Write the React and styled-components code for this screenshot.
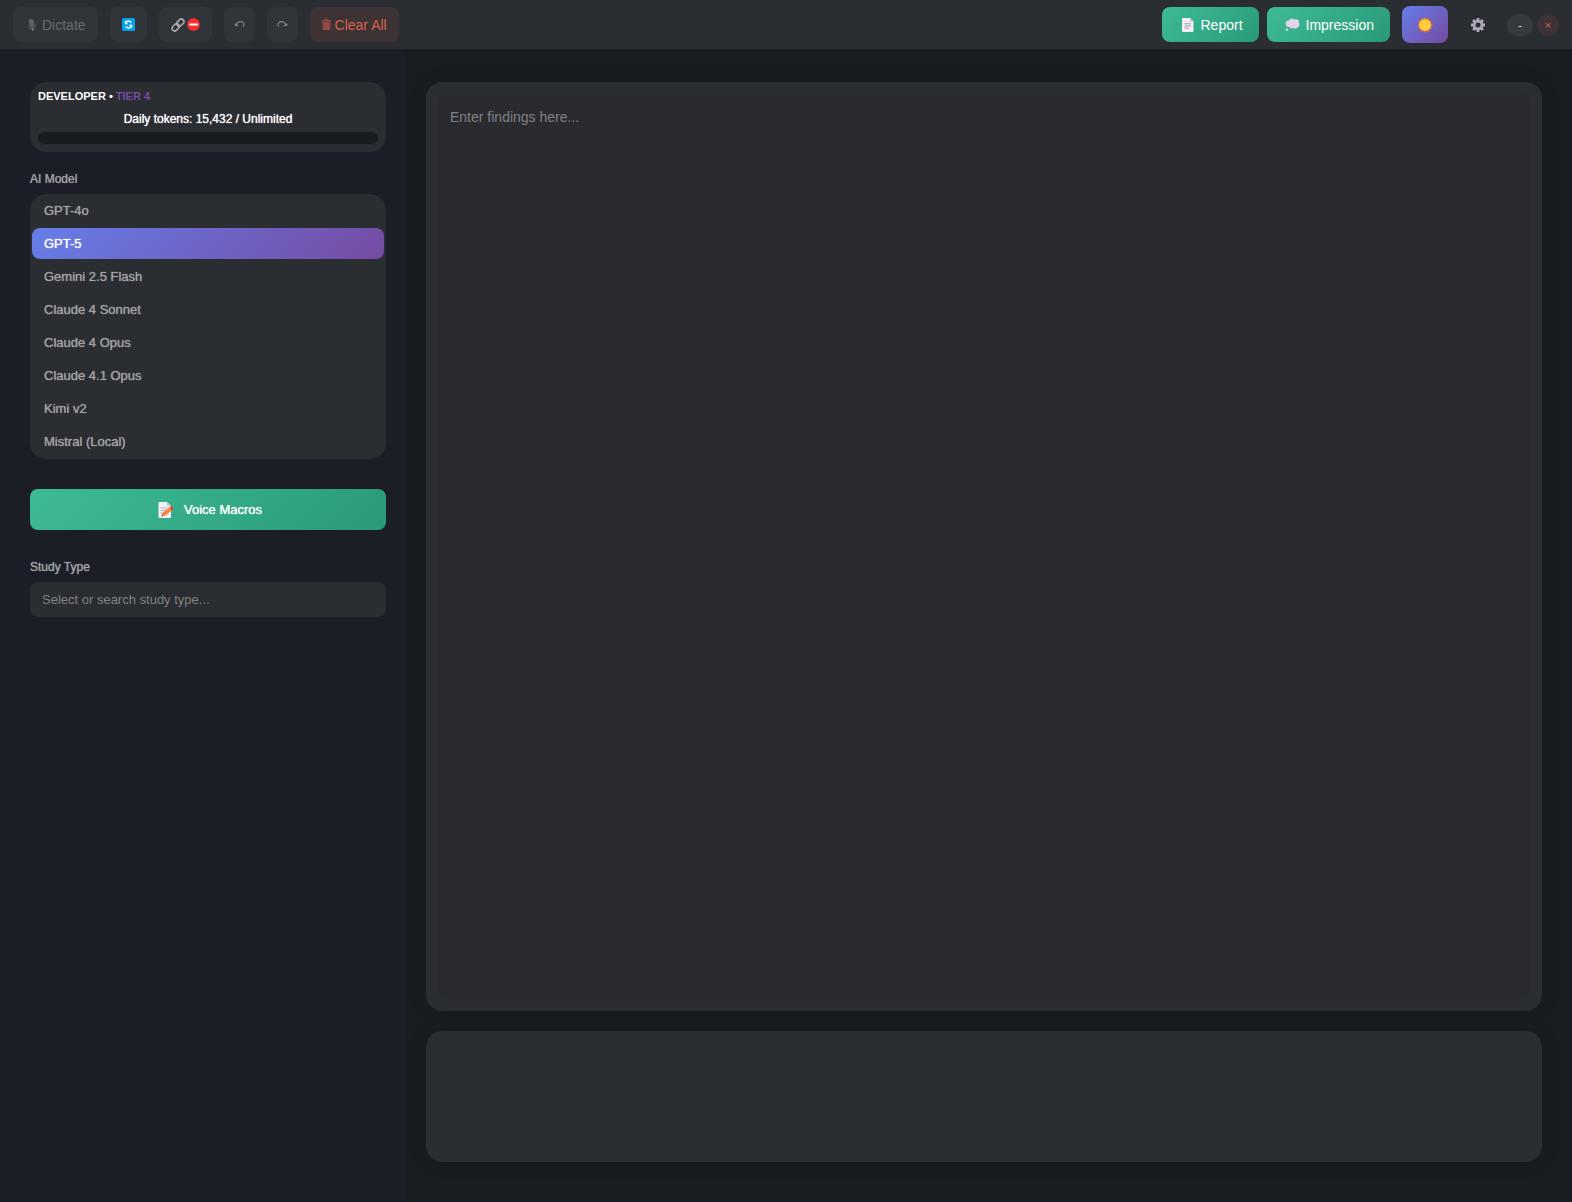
import React, { useState } from "react";
import styled, { createGlobalStyle, css } from "styled-components";

const GlobalStyle = createGlobalStyle`
  * { box-sizing: border-box; }
  body {
    margin: 0;
    background: #191c21;
    color: #e8eaed;
    font-family: "Liberation Sans", Arial, sans-serif;
  }
  button, input, textarea { font-family: inherit; }
`;

const Page = styled.div`
  min-height: 100vh;
  display: flex;
  flex-direction: column;
`;

const Toolbar = styled.header`
  height: 49px;
  flex: none;
  display: flex;
  align-items: center;
  justify-content: space-between;
  padding: 0 13px;
  background: #2a2d31;
`;

const Group = styled.div`
  display: flex;
  align-items: center;
  gap: ${(p) => p.$gap}px;
`;

const green = "linear-gradient(135deg, #3dbb95 0%, #2a9a79 100%)";
const violet = "linear-gradient(135deg, #667eea 0%, #764ba2 100%)";

const ToolButton = styled.button`
  height: 35px;
  display: flex;
  align-items: center;
  justify-content: center;
  gap: ${(p) => p.$gap || 4}px;
  padding: 0 ${(p) => p.$pad || 12}px;
  border: 0;
  border-radius: 8px;
  background: #313438;
  color: #686b6e;
  font-size: 14px;
  cursor: pointer;
  ${(p) => p.$danger && css`
    background: #3d3334;
    color: #d9614f;
  `}
`;

const ActionButton = styled.button`
  height: 35px;
  display: flex;
  align-items: center;
  gap: 6px;
  padding: 0 16px 0 18px;
  border: 0;
  border-radius: 8px;
  background: ${green};
  color: #fff;
  font-size: 14px;
  cursor: pointer;
`;

const ThemeButton = styled.button`
  width: 46px;
  height: 37px;
  display: grid;
  place-items: center;
  margin-left: 4px;
  padding: 0;
  border: 0;
  border-radius: 8px;
  background: ${violet};
  cursor: pointer;
`;

const GearButton = styled.button`
  width: 43px;
  height: 35px;
  display: grid;
  place-items: center;
  padding: 0;
  border: 0;
  background: none;
  cursor: pointer;
`;

const WindowButton = styled.button`
  width: ${(p) => (p.$close ? 22 : 26)}px;
  height: 22px;
  display: grid;
  place-items: center;
  padding: 0;
  border: 0;
  border-radius: 11px;
  background: ${(p) => (p.$close ? "#3d3334" : "#36393d")};
  color: ${(p) => (p.$close ? "#d9614f" : "#e8eaed")};
  font-size: 11px;
  cursor: pointer;
`;

const Body = styled.div`
  flex: 1;
  display: flex;
`;

const Sidebar = styled.aside`
  width: 406px;
  flex: none;
  padding: 33px 20px 40px 30px;
  background: #1b1e26;
`;

const Card = styled.section`
  height: 70px;
  margin-bottom: 19px;
  padding: 6px 8px 8px;
  border-radius: 16px;
  background: #2a2d31;
`;

const Tier = styled.div`
  font-size: 11px;
  line-height: 16px;
  font-weight: 700;
  color: #fff;
  span { color: #764ba2; }
`;

const Tokens = styled.div`
  padding: 7px 0 5px;
  text-align: center;
  font-size: 12px;
  line-height: 16px;
  color: #fff;
  text-shadow: 0 0 1px currentColor;
`;

const Meter = styled.div`
  height: 12px;
  border-radius: 6px;
  background: #191c1f;
`;

const Label = styled.label`
  display: block;
  margin-bottom: 7px;
  font-size: 12px;
  line-height: 16px;
  color: #a0a2a4;
  text-shadow: 0 0 1px #a0a2a4;
`;

const ModelList = styled.div`
  display: flex;
  flex-direction: column;
  gap: 2px;
  margin-bottom: 30px;
  padding: 1px 2px 2px;
  border-radius: 16px;
  background: #2a2d31;
`;

const Model = styled.button`
  height: 31px;
  padding: 0 12px;
  border: 0;
  border-radius: 8px;
  background: ${(p) => (p.$active ? violet : "none")};
  color: ${(p) => (p.$active ? "#fff" : "#a0a2a4")};
  font-size: 13px;
  text-align: left;
  text-shadow: 0 0 1px currentColor;
  cursor: pointer;
`;

const MacroButton = styled.button`
  width: 100%;
  height: 41px;
  display: flex;
  align-items: center;
  justify-content: center;
  gap: 10px;
  margin-bottom: 29px;
  padding: 0 0 0 4px;
  border: 0;
  border-radius: 8px;
  background: ${green};
  color: #fff;
  font-size: 13px;
  text-shadow: 0 0 1px #fff;
  cursor: pointer;
`;

const Search = styled.input`
  width: 100%;
  height: 35px;
  padding: 0 12px;
  border: 0;
  border-radius: 8px;
  background: #2a2d31;
  color: #e8eaed;
  font-size: 13px;
  &::placeholder { color: #808284; opacity: 1; }
`;

const Main = styled.main`
  flex: 1;
  min-width: 0;
  display: flex;
  flex-direction: column;
  gap: 20px;
  padding: 33px 30px 40px 20px;
`;

const Panel = styled.section`
  display: flex;
  flex: ${(p) => (p.$grow ? "1" : "none")};
  min-height: 131px;
  padding: 12px;
  border-radius: 16px;
  background: #2a2d31;
  box-shadow: 0 0 20px #0000001a;
`;

const Findings = styled.textarea`
  flex: 1;
  min-width: 0;
  padding: 15px 12px;
  border: 0;
  border-radius: 8px;
  resize: none;
  background: #292b2e;
  color: #e8eaed;
  font-size: 14px;
  line-height: 16px;
  &::placeholder { color: #808284; opacity: 1; }
`;

const MicIcon = () => (
  <svg width="13" height="14" viewBox="0 0 13 14" aria-hidden="true">
    <g transform="rotate(-10 7 7)">
      <rect x="4.500" y="1" width="5" height="8" rx="2.500" fill="#5f6265" />
      <path d="M3.700 6v1.500a3.300 3.300 0 0 0 6.600 0V6" stroke="#54575a" fill="none" />
      <path d="M7 9v4" stroke="#666a6d" strokeWidth="2" />
    </g>
  </svg>
);

const RefreshIcon = () => (
  <svg width="13" height="13" viewBox="0 0 13 13" aria-hidden="true">
    <rect width="13" height="13" rx="1.500" fill="#00a2ed" />
    <path d="M9.600 8.300A3.400 3.400 0 0 1 3.800 8.400M3.400 4.700a3.400 3.400 0 0 1 5.800-.1" fill="none" stroke="#fff" strokeWidth="1.500" />
    <path d="M2.800 2.800v3.500h3.500zM10.200 10.200V6.700H6.700z" fill="#fff" />
  </svg>
);

const LinkIcon = () => (
  <svg width="14" height="14" viewBox="0 0 14 14" aria-hidden="true">
    <g transform="rotate(-45 7 7)" fill="none" stroke="#aaa9ad" strokeWidth="1.600">
      <rect x="-0.300" y="4.400" width="8" height="5.200" rx="2.600" />
      <rect x="6.300" y="4.400" width="8" height="5.200" rx="2.600" />
    </g>
  </svg>
);

const NoEntryIcon = () => (
  <svg width="13" height="13" viewBox="0 0 13 13" aria-hidden="true">
    <circle cx="6.500" cy="6.500" r="6.300" fill="#f92f2f" />
    <rect x="2" y="5.400" width="9" height="2.200" rx="1" fill="#fff" />
  </svg>
);

const CurveIcon = ({ flip }) => (
  <svg width="11" height="9" viewBox="0 0 11 9" aria-hidden="true">
    <g transform={flip ? "translate(11 0) scale(-1 1)" : undefined}>
      <path d="M2.500 5C2.800 1 10 .3 10 4.500c0 .9-.3 1.500-.9 2" fill="none" stroke="#7d8083" strokeWidth="1.200" />
      <path d="M.3 3.200 5.200 6H1z" fill="#85888b" />
    </g>
  </svg>
);

const TrashIcon = () => (
  <svg width="9" height="13" viewBox="0 0 9 13" aria-hidden="true">
    <path d="M1 3.500h7L7.400 12H1.600z" fill="#84443e" />
    <path d="M0 2.500h9M2.500 1h4M2.800 4v7.500M4.500 4v7.500M6.200 4v7.500" fill="none" stroke="#aa5146" strokeWidth=".8" />
    <path d="M1 2.800v8.700h7V2.800" fill="none" stroke="#a34e45" strokeWidth=".8" />
  </svg>
);

const PageIcon = () => (
  <svg width="15" height="14" viewBox="-2 0 15 14" aria-hidden="true">
    <path d="M1 0h7L11.500 3.700v9.300a1 1 0 0 1-1 1H1a1 1 0 0 1-1-1V1a1 1 0 0 1 1-1z" fill="#f3eef8" />
    <path d="M8 0v3.700H11.500z" fill="#cdc4d6" />
    <path d="M2.500 5.800h6.500M2.500 8h6.500M2.500 10.200h4.500" stroke="#a79bb0" />
  </svg>
);

const ThoughtIcon = () => (
  <svg width="15" height="14" viewBox="0 0 15 14" aria-hidden="true">
    <g fill="#dfd4ec">
      <circle cx="4" cy="5.700" r="3.300" />
      <circle cx="7" cy="4" r="3.200" />
      <circle cx="10.800" cy="4.500" r="3.200" />
      <circle cx="12" cy="6.500" r="2.500" />
      <circle cx="7" cy="7.500" r="3" />
      <circle cx="10.300" cy="7.800" r="2.800" />
      <circle cx="2" cy="11.800" r="1.300" />
    </g>
  </svg>
);

const ray = (cx, cy, n, outer, inner) =>
  Array.from({ length: n * 2 }, (_, i) => {
    const a = (i * Math.PI) / n - Math.PI / 2;
    const r = i % 2 ? inner : outer;
    return `${cx + r * Math.cos(a)},${cy + r * Math.sin(a)}`;
  }).join(" ");

const SunIcon = () => (
  <svg width="16" height="16" viewBox="0 0 16 16" aria-hidden="true">
    <polygon points={ray(8, 8, 12, 8, 6)} fill="#f47a28" />
    <circle cx="8" cy="8" r="5.800" fill="#ffcf3b" />
  </svg>
);

const GearIcon = () => (
  <svg width="14" height="14" viewBox="0 0 14 14" aria-hidden="true">
    <g fill="none" stroke="#b0a8ba">
      <circle cx="7" cy="7" r="3.900" strokeWidth="2.800" />
      {[0, 45, 90, 135].map((a) => (
        <path key={a} d="M7 0v2.400M7 11.600V14" strokeWidth="2.800" transform={`rotate(${a} 7 7)`} />
      ))}
    </g>
  </svg>
);

const MemoIcon = () => (
  <svg width="16" height="16" viewBox="0 0 16 16" aria-hidden="true">
    <path d="M1.500 0h7.300L13 4v11a1 1 0 0 1-1 1H1.500a1 1 0 0 1-1-1V1a1 1 0 0 1 1-1z" fill="#f3eef8" />
    <path d="M8.800 0v4H13z" fill="#cdc4d6" />
    <path d="M2.500 6h7M2.500 8.500h6M2.500 11H6" stroke="#b9afc2" />
    <path d="m3.500 14.500 1-3.500L11.300 5.500l2.600 2.800L7 13.800z" fill="#ff822d" />
    <path d="m11.300 5.500 1.200-1c1.500-.6 3.200 1.300 2.600 2.700l-1.200 1.100z" fill="#f8312f" />
    <path d="m3.500 14.500.5-1.700 1.200 1.200z" fill="#5b4a55" />
  </svg>
);

const models = [
  "GPT-4o",
  "GPT-5",
  "Gemini 2.5 Flash",
  "Claude 4 Sonnet",
  "Claude 4 Opus",
  "Claude 4.1 Opus",
  "Kimi v2",
  "Mistral (Local)",
];

export default function App() {
  const [model, setModel] = useState("GPT-5");
  return (
    <Page>
      <GlobalStyle />
      <Toolbar>
        <Group $gap={12}>
          <ToolButton><MicIcon />Dictate</ToolButton>
          <ToolButton aria-label="Refresh"><RefreshIcon /></ToolButton>
          <ToolButton $gap={2} aria-label="Link status"><LinkIcon /><NoEntryIcon /></ToolButton>
          <ToolButton $pad={10} aria-label="Undo"><CurveIcon /></ToolButton>
          <ToolButton $pad={10} aria-label="Redo"><CurveIcon flip /></ToolButton>
          <ToolButton $danger><TrashIcon />Clear All</ToolButton>
        </Group>
        <Group $gap={8}>
          <ActionButton><PageIcon />Report</ActionButton>
          <ActionButton><ThoughtIcon />Impression</ActionButton>
          <ThemeButton aria-label="Light theme"><SunIcon /></ThemeButton>
          <GearButton aria-label="Settings"><GearIcon /></GearButton>
          <Group $gap={4}>
            <WindowButton aria-label="Minimize">-</WindowButton>
            <WindowButton $close aria-label="Close">×</WindowButton>
          </Group>
        </Group>
      </Toolbar>
      <Body>
        <Sidebar>
          <Card>
            <Tier>DEVELOPER • <span>TIER 4</span></Tier>
            <Tokens>Daily tokens: 15,432 / Unlimited</Tokens>
            <Meter role="meter" aria-label="Daily tokens" aria-valuenow={0} />
          </Card>
          <Label as="div" id="model-label">AI Model</Label>
          <ModelList role="group" aria-labelledby="model-label">
            {models.map((m) => (
              <Model key={m} $active={m === model} aria-pressed={m === model} onClick={() => setModel(m)}>
                {m}
              </Model>
            ))}
          </ModelList>
          <MacroButton><MemoIcon />Voice Macros</MacroButton>
          <Label htmlFor="study">Study Type</Label>
          <Search id="study" placeholder="Select or search study type..." />
        </Sidebar>
        <Main>
          <Panel $grow>
            <Findings aria-label="Findings" placeholder="Enter findings here..." />
          </Panel>
          <Panel aria-label="Output" />
        </Main>
      </Body>
    </Page>
  );
}
